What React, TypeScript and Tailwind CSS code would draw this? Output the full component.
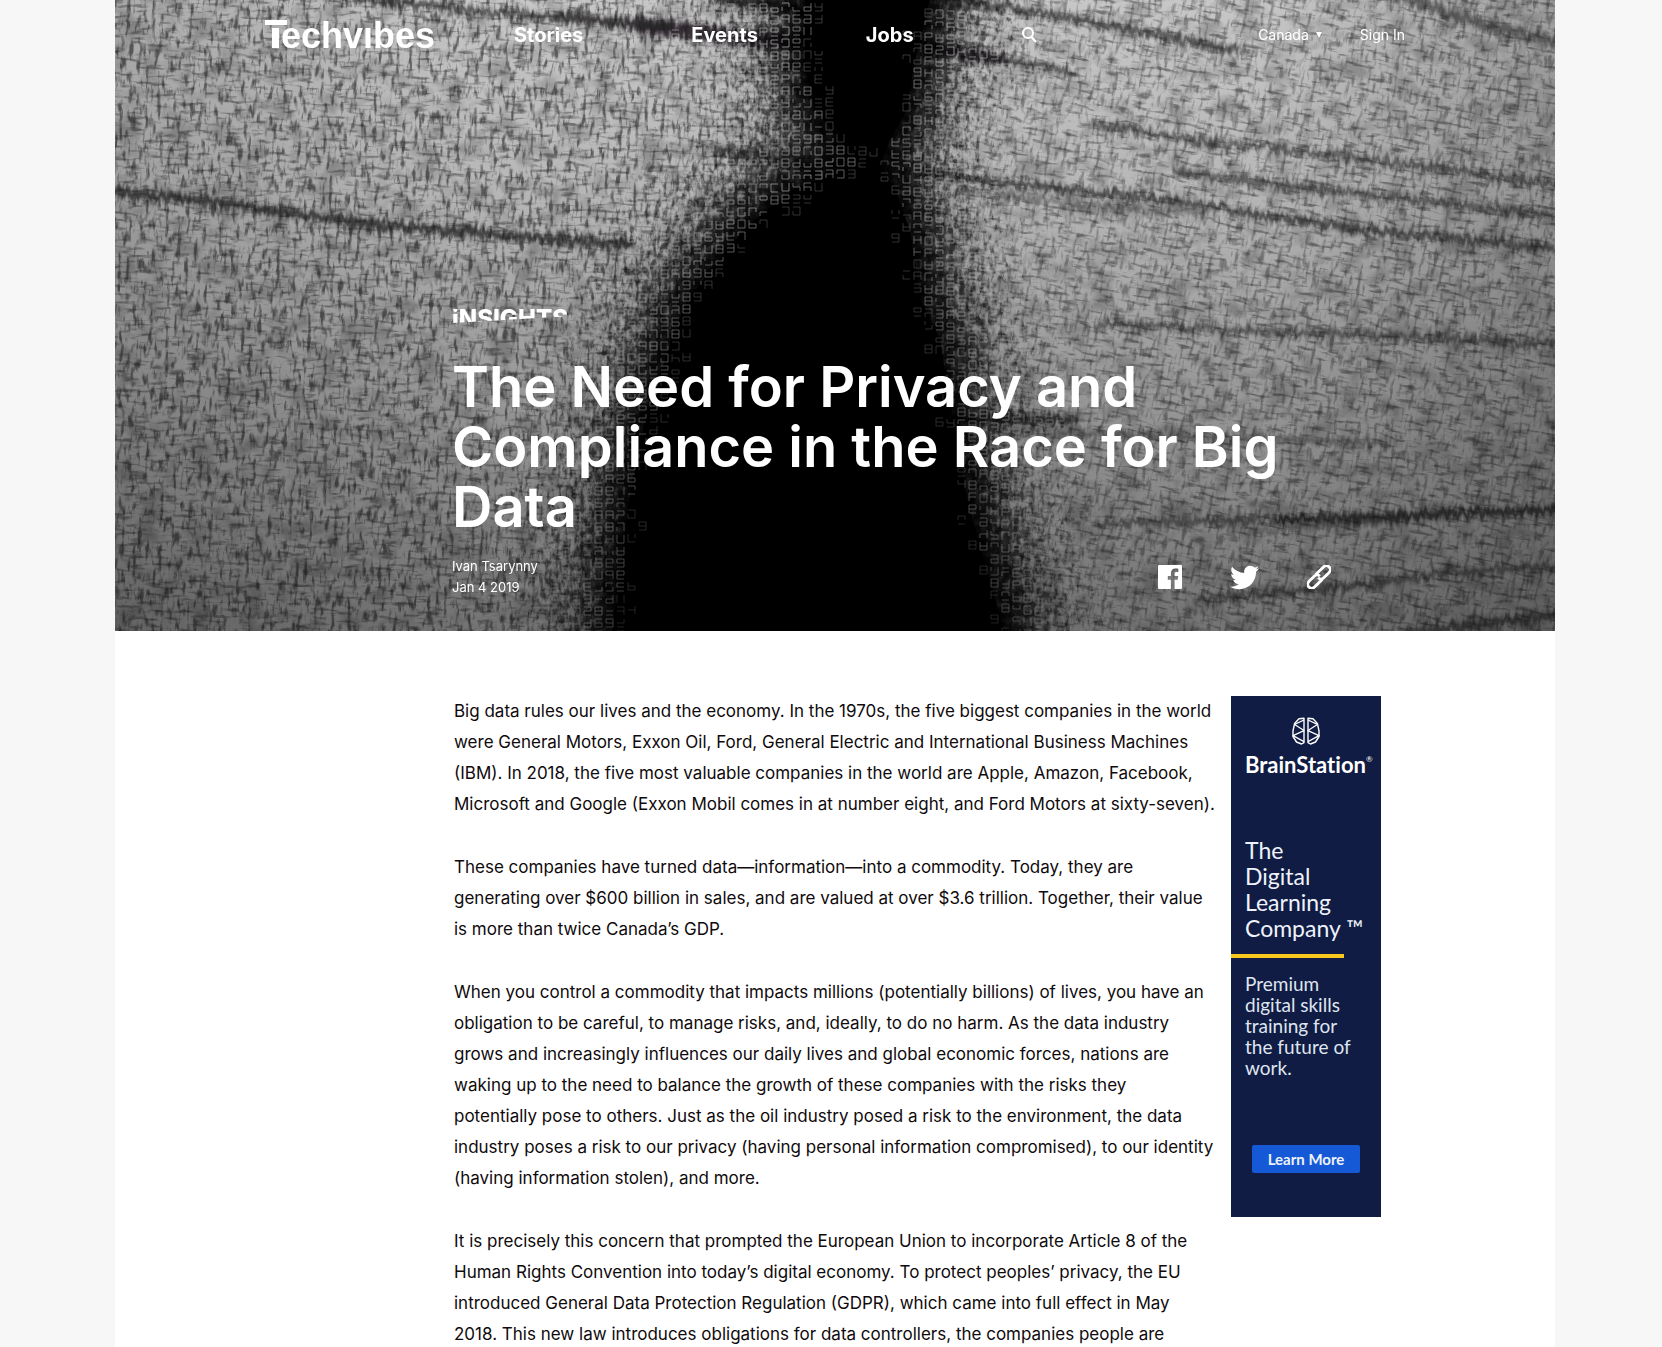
import { FaTwitter } from "react-icons/fa";

const EDGES: [number, number, number][] = [
  [0, 690, 815],
  [60, 688, 800],
  [110, 700, 792],
  [140, 725, 775],
  [165, 745, 765],
  [188, 680, 780],
  [230, 628, 795],
  [300, 572, 806],
  [340, 556, 825],
  [420, 530, 838],
  [500, 514, 852],
  [640, 496, 892],
];

function edgesAt(y: number): [number, number] {
  for (let i = 1; i < EDGES.length; i++) {
    const [y0, l0, r0] = EDGES[i - 1];
    const [y1, l1, r1] = EDGES[i];
    if (y <= y1) {
      const t = (y - y0) / (y1 - y0);
      return [l0 + (l1 - l0) * t, r0 + (r1 - r0) * t];
    }
  }
  return [496, 892];
}

function random(seed: number) {
  let s = seed;
  return () => {
    s = (s * 1664525 + 1013904223) % 4294967296;
    return s / 4294967296;
  };
}

/* Seven-segment style marks, grouped by brightness. */
function codeMarks(): string[] {
  const rnd = random(7);
  const buckets = ["", "", "", ""];
  for (let row = 0; row < 53; row++) {
    for (let col = 0; col < 62; col++) {
      const x = 370 + col * 11;
      const tilt = x < 735 ? (x - 735) * -0.02 : (x - 735) * 0.09;
      const y = Math.round(row * 12 + 2 + tilt);
      const [l, r] = edgesAt(Math.max(0, Math.min(y, 631)));
      const outside = x < (l + r) / 2 ? l - x : x - r;
      const reach = 50 + rnd() * 115;
      if (outside < -22 + rnd() * 26 || outside > reach) continue;
      const level = Math.min(3, Math.max(0, Math.floor((outside + 20) / 20)));
      const segs = [
        `M${x} ${y}h7`,
        `M${x} ${y}v4`,
        `M${x + 7} ${y}v4`,
        `M${x} ${y + 4}h7`,
        `M${x} ${y + 4}v4`,
        `M${x + 7} ${y + 4}v4`,
        `M${x} ${y + 8}h7`,
      ];
      for (const seg of segs) if (rnd() < 0.7) buckets[level] += seg;
    }
  }
  return buckets;
}

const MARKS = codeMarks();

function silhouette() {
  const left = EDGES.map(([y, l]) => `${l} ${y}`);
  const right = [...EDGES].reverse().map(([y, , r]) => `${r} ${y}`);
  return `M${[...left, ...right].join("L")}Z`;
}
const BODY = silhouette();

function HeroPhoto() {
  return (
    <svg
      aria-hidden="true"
      className="absolute inset-0 h-full w-full"
      viewBox="0 0 1440 631"
      preserveAspectRatio="xMidYMid slice"
    >
      <defs>
        <filter id="warp" x="0" y="0" width="1" height="1" colorInterpolationFilters="sRGB">
          <feTurbulence type="fractalNoise" baseFrequency="0.24 0.07" numOctaves={4} seed={4} />
          <feColorMatrix values="0 0 0 0 0.16  0 0 0 0 0.155  0 0 0 0 0.16  4 0 0 0 -2" />
        </filter>
        <filter id="weft" x="0" y="0" width="1" height="1" colorInterpolationFilters="sRGB">
          <feTurbulence type="fractalNoise" baseFrequency="0.06 0.26" numOctaves={4} seed={11} />
          <feColorMatrix values="0 0 0 0 0.16  0 0 0 0 0.155  0 0 0 0 0.16  4 0 0 0 -2.1" />
        </filter>
        <filter id="clouds" x="0" y="0" width="1" height="1" colorInterpolationFilters="sRGB">
          <feTurbulence type="fractalNoise" baseFrequency="0.04 0.05" numOctaves={3} seed={3} />
          <feColorMatrix values="0 0 0 0 0.2  0 0 0 0 0.2  0 0 0 0 0.2  3 0 0 0 -1.35" />
        </filter>
        <filter id="frayed" filterUnits="userSpaceOnUse" x="-20" y="-20" width="1480" height="680">
          <feGaussianBlur stdDeviation="2.4" result="b" />
          <feTurbulence type="fractalNoise" baseFrequency="0.2 0.05" numOctaves={2} seed={8} result="n" />
          <feDisplacementMap in="b" in2="n" scale="16" xChannelSelector="R" yChannelSelector="G" />
        </filter>
        <filter id="edge" filterUnits="userSpaceOnUse" x="200" y="-60" width="1000" height="760">
          <feGaussianBlur stdDeviation="18" result="b" />
          <feTurbulence type="fractalNoise" baseFrequency="0.08 0.1" numOctaves={2} seed={5} result="n" />
          <feDisplacementMap in="b" in2="n" scale="40" xChannelSelector="R" yChannelSelector="B" />
        </filter>
        <filter id="halo" filterUnits="userSpaceOnUse" x="200" y="-60" width="1000" height="760">
          <feGaussianBlur stdDeviation="26" result="b" />
          <feTurbulence type="fractalNoise" baseFrequency="0.2 0.12" numOctaves={3} seed={9} result="n" />
          <feDisplacementMap in="b" in2="n" scale="190" xChannelSelector="G" yChannelSelector="R" />
        </filter>
        <linearGradient id="shade" x1="0" y1="0" x2="0" y2="1">
          <stop offset="0" stopColor="#000" stopOpacity="0" />
          <stop offset="0.3" stopColor="#000" stopOpacity="0.08" />
          <stop offset="1" stopColor="#000" stopOpacity="0.42" />
        </linearGradient>
        <linearGradient id="leftShade" x1="0" y1="0" x2="1" y2="0">
          <stop offset="0" stopColor="#000" stopOpacity="0.14" />
          <stop offset="0.25" stopColor="#000" stopOpacity="0" />
          <stop offset="0.8" stopColor="#000" stopOpacity="0" />
          <stop offset="1" stopColor="#000" stopOpacity="0.2" />
        </linearGradient>
        <clipPath id="rightHalf">
          <path d="M760 0H1440V631H760Z" />
        </clipPath>
        <clipPath id="leftHalf">
          <path d="M0 0H760V631H0Z" />
        </clipPath>
      </defs>

      <rect width="1440" height="631" fill="#c8c7c8" />
      <g clipPath="url(#leftHalf)">
        <g transform="rotate(2)">
          <rect x="-50" y="-60" width="860" height="760" filter="url(#warp)" opacity="0.62" />
          <rect x="-50" y="-60" width="860" height="760" filter="url(#weft)" opacity="0.45" />
        </g>
      </g>
      <g clipPath="url(#rightHalf)">
        <g transform="rotate(10 1100 300)">
          <rect x="700" y="-150" width="860" height="960" filter="url(#warp)" opacity="0.38" />
          <rect x="700" y="-150" width="860" height="960" filter="url(#weft)" opacity="0.45" />
        </g>
      </g>
      <rect width="1440" height="631" filter="url(#clouds)" opacity="0.28" />
      <rect width="1440" height="631" fill="url(#leftShade)" />

      <g fill="none" stroke="#1c1b1c" filter="url(#frayed)">
        <path d="M-10 192C100 198 180 216 280 226S420 236 520 246" strokeWidth="9" opacity="0.75" />
        <path d="M226 -4C330 10 420 14 520 26" strokeWidth="7" opacity="0.7" />
        <path d="M440 14L560 28" strokeWidth="8" opacity="0.6" />
        <path d="M520 24C580 32 640 40 720 46" strokeWidth="16" opacity="0.85" />
        <path d="M600 -4L720 16" strokeWidth="14" opacity="0.8" />
        <path d="M600 150L720 166" strokeWidth="10" opacity="0.6" />
        <path d="M820 -4C900 8 960 20 1008 28L1128 52" strokeWidth="7" opacity="0.7" />
        <path d="M800 44L890 60" strokeWidth="12" opacity="0.85" />
        <path d="M870 56L960 74" strokeWidth="6" opacity="0.7" />
        <path d="M980 124L1080 140L1176 150L1440 184" strokeWidth="6" opacity="0.65" />
        <path d="M1060 172L1176 186L1300 200L1440 216" strokeWidth="6" opacity="0.65" />
        <path d="M780 168L900 184L1050 200L1150 216L1272 232L1440 248" strokeWidth="7" opacity="0.7" />
        <path d="M840 190L960 204L1090 214" strokeWidth="5" opacity="0.5" />
        <path d="M1270 -10L1360 22L1450 44" strokeWidth="12" opacity="0.5" />
        <path d="M980 324L1176 332L1450 344" strokeWidth="6" opacity="0.6" />
        <path d="M820 418L960 420" strokeWidth="10" opacity="0.8" />
        <path d="M880 430L1100 438L1280 444" strokeWidth="6" opacity="0.45" />
        <path d="M980 524L1200 518" strokeWidth="6" opacity="0.6" />
        <path d="M1160 520L1450 510" strokeWidth="8" opacity="0.8" />
        <path d="M1130 532L1300 520" strokeWidth="4" opacity="0.5" />
        <path d="M1080 600L1240 586L1340 572L1450 566" strokeWidth="6" opacity="0.6" />
        <path d="M1280 636L1360 624L1450 614" strokeWidth="9" opacity="0.6" />
      </g>

      <path d={BODY} stroke="#000" strokeWidth="90" opacity="0.6" filter="url(#halo)" />
      <path d={BODY} stroke="#000" strokeWidth="44" filter="url(#edge)" />
      <path d={BODY} />

      <g fill="none" stroke="#b4b4b4" strokeWidth="1">
        <path d={MARKS[0]} opacity="0.3" />
        <path d={MARKS[1]} opacity="0.55" />
        <path d={MARKS[2]} opacity="0.7" />
        <path d={MARKS[3]} opacity="0.6" />
      </g>
      <rect width="1440" height="631" fill="url(#shade)" />
    </svg>
  );
}

function Logo() {
  return (
    <svg width="176" height="52" viewBox="0 0 176 52" role="img" aria-label="Techvibes" fill="#fff">
      <rect x="0" y="11" width="22" height="5" />
      <rect x="7" y="19" width="7" height="20" />
      <text x="16" y="39" fontFamily="Liberation Sans, sans-serif" fontWeight="700" fontSize="36">
        echvıbes
      </text>
    </svg>
  );
}

function SiteHeader() {
  return (
    <header className="relative flex h-[70px] items-center px-[150px]">
      <a href="#home" className="mr-[73px] shrink-0">
        <Logo />
      </a>
      <nav className="flex items-center gap-[108px] text-xl font-bold">
        <a href="#stories">Stories</a>
        <a href="#events">Events</a>
        <a href="#jobs">Jobs</a>
        <button type="button" aria-label="Search">
          <svg width="15" height="16" viewBox="0 0 15 16" fill="none" stroke="#fff" strokeWidth="2">
            <circle cx="6" cy="6" r="5" />
            <path d="M9.5 10L14 15" strokeWidth="2.4" />
          </svg>
        </button>
      </nav>
      <div className="ml-auto flex items-center gap-[38px] text-sm">
        <button type="button" className="flex items-center gap-[7px]">
          Canada
          <svg width="6" height="6" viewBox="0 0 6 6" fill="#fff" aria-hidden="true">
            <path d="M0 0H6L3 6Z" />
          </svg>
        </button>
        <a href="#sign-in">Sign In</a>
      </div>
    </header>
  );
}

function ShareLinks() {
  return (
    <div className="flex items-center">
      <a href="#facebook" aria-label="Share on Facebook">
        <svg width="24" height="24" viewBox="0 0 24 24" fill="#fff">
          <path d="M1.3 0H22.7A1.3 1.3 0 0 1 24 1.3V22.7A1.3 1.3 0 0 1 22.7 24H16.6V14.7H19.7L20.2 11.1H16.6V8.8C16.6 7.7 16.9 7 18.4 7H20.3V3.8C20 3.7 18.8 3.6 17.5 3.6C14.8 3.6 12.9 5.3 12.9 8.4V11.1H9.8V14.7H12.9V24H1.3A1.3 1.3 0 0 1 0 22.7V1.3A1.3 1.3 0 0 1 1.3 0Z" />
        </svg>
      </a>
      <a href="#twitter" aria-label="Share on Twitter" className="ml-12">
        <FaTwitter size={29} />
      </a>
      <a href="#link" aria-label="Copy link" className="ml-12">
        <svg width="24" height="24" viewBox="0 0 24 24" fill="none" stroke="#fff" strokeWidth="2.8">
          <g transform="rotate(-45 12 12)">
            <path d="M12.5 16H1.7A4 4 0 0 1 1.7 8H9.2A4 4 0 0 1 13.2 12" />
            <path d="M11.5 8H22.3A4 4 0 0 1 22.3 16H14.8A4 4 0 0 1 10.8 12" />
          </g>
        </svg>
      </a>
    </div>
  );
}

const PARAGRAPHS = [
  "Big data rules our lives and the economy. In the 1970s, the five biggest companies in the world were General Motors, Exxon Oil, Ford, General Electric and International Business Machines (IBM). In 2018, the five most valuable companies in the world are Apple, Amazon, Facebook, Microsoft and Google (Exxon Mobil comes in at number eight, and Ford Motors at sixty-seven).",
  "These companies have turned data—information—into a commodity. Today, they are generating over $600 billion in sales, and are valued at over $3.6 trillion. Together, their value is more than twice Canada’s GDP.",
  "When you control a commodity that impacts millions (potentially billions) of lives, you have an obligation to be careful, to manage risks, and, ideally, to do no harm. As the data industry grows and increasingly influences our daily lives and global economic forces, nations are waking up to the need to balance the growth of these companies with the risks they\npotentially pose to others. Just as the oil industry posed a risk to the environment, the data industry poses a risk to our privacy (having personal information compromised), to our identity (having information stolen), and more.",
  "It is precisely this concern that prompted the European Union to incorporate Article 8 of the Human Rights Convention into today’s digital economy. To protect peoples’ privacy, the EU introduced General Data Protection Regulation (GDPR), which came into full effect in May 2018. This new law introduces obligations for data controllers, the companies people are",
];

function BrainStationAd() {
  return (
    <aside className="w-[150px] shrink-0 self-start bg-[#101c43] pt-[21px] pb-11 font-['Lato',sans-serif] text-[#eef3fb] [font-variant-ligatures:none]">
      <svg
        className="mx-auto"
        width="28"
        height="28"
        viewBox="0 0 28 28"
        fill="none"
        stroke="#fff"
        strokeWidth="1.4"
        strokeLinejoin="round"
        aria-hidden="true"
      >
        <g id="lobe">
          <path d="M12 1.2L7 1.8L2.6 6.4L1 14V19.5L4.5 25L9.5 27L12 25.6Z" />
          <path d="M12 3L2.6 7.4L12 13.6L1 18.6L12 24.6" strokeWidth="1.2" />
        </g>
        <use href="#lobe" transform="matrix(-1 0 0 1 28 0)" />
      </svg>
      <p className="flex pt-1.5 pl-3.5 text-[22px] leading-[28px] font-bold whitespace-nowrap text-white">
        BrainStation<span className="text-[8px] leading-[16px] font-normal">®</span>
      </p>
      <p className="pt-[58px] pb-[13px] pl-3.5 text-[23px] leading-[26px] whitespace-nowrap">
        The
        <br />
        Digital
        <br />
        Learning
        <br />
        Company ™
      </p>
      <div className="h-1 w-3/4 bg-[#f9c81c]" />
      <p className="px-3.5 pt-[15px] text-[19px] leading-[21px] text-[#dfe5f0]">
        Premium digital skills training for the future of work.
      </p>
      <a
        href="#learn-more"
        className="mx-auto mt-[67px] block w-[108px] rounded-xs bg-[#1559d6] text-center text-[15px] leading-[28px] font-bold"
      >
        Learn More
      </a>
    </aside>
  );
}

export default function App() {
  return (
    <div className="h-screen overflow-hidden bg-[#f7f7f7] pl-2 font-['Inter',sans-serif]">
      <div className="mx-auto min-h-full max-w-[1440px] bg-white">
        <section className="relative flex flex-col bg-[#555] text-white">
          <HeroPhoto />
          <SiteHeader />
          <div className="relative mt-[239px] flex flex-col px-[224px] pb-[33px] pl-[337px]">
            <div className="h-[14px] w-[120px] overflow-hidden [clip-path:polygon(0_0,100%_0,100%_50%,0_100%)]">
              <a href="#insights" className="block text-2xl leading-[19px] font-extrabold">
                iNSIGHTS
              </a>
            </div>
            <h1 className="mt-[34px] max-w-[850px] text-[56px] leading-[60px] font-semibold">
              The Need for Privacy and Compliance in the Race for Big Data
            </h1>
            <div className="mt-[19px] flex items-center justify-between">
              <div className="text-[13px] leading-[21px]">
                <p>Ivan Tsarynny</p>
                <p>Jan 4 2019</p>
              </div>
              <ShareLinks />
            </div>
          </div>
        </section>
        <main className="flex pt-[65px] pr-[174px] pl-[339px]">
          <article className="min-w-0 flex-1 pr-[14px] text-[17px] leading-[31px] text-[#0f0a0c]">
            {PARAGRAPHS.map((text) => (
              <p key={text} className="mb-8 whitespace-pre-line">
                {text}
              </p>
            ))}
          </article>
          <BrainStationAd />
        </main>
      </div>
    </div>
  );
}
